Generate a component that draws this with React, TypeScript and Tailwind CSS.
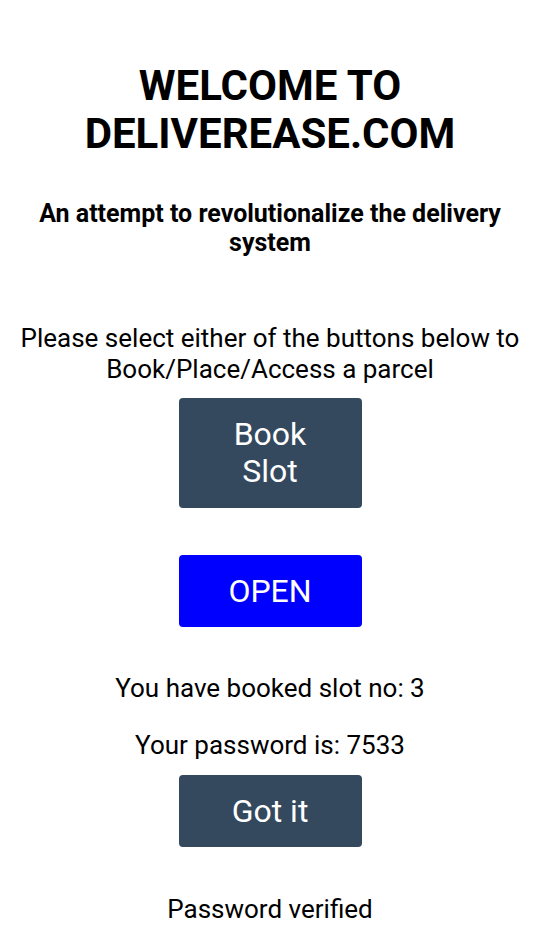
export default function App() {
  return (
    <div className="min-h-screen bg-white text-black pl-1 flex flex-col items-center text-center font-['Roboto',_'Liberation_Sans',_sans-serif]">
      <h1 className="mt-[62px] text-[42px] leading-[48px] font-bold">
        WELCOME TO
        <br />
        DELIVEREASE.COM
      </h1>

      <h2 className="mt-[41px] px-4 text-[25px] leading-[29px] font-bold">
        An attempt to revolutionalize the delivery system
      </h2>

      <p className="mt-[66px] px-4 text-[26px] leading-[31px]">
        Please select either of the buttons below to Book/Place/Access a parcel
      </p>

      <button className="mt-[13px] w-[183px] py-[18px] px-10 rounded-[4px] bg-[#34495e] text-white text-[32px] leading-[37px]">
        Book
        <br />
        Slot
      </button>

      <button className="mt-[47px] w-[183px] py-[17px] rounded-[4px] bg-[#0000ff] text-white text-[32px] leading-[38px]">
        OPEN
      </button>

      <p className="mt-[46px] text-[26px] leading-[31px]">You have booked slot no: 3</p>
      <p className="mt-[26px] text-[26px] leading-[31px]">Your password is: 7533</p>

      <button className="mt-[14px] w-[183px] py-[17px] rounded-[4px] bg-[#34495e] text-white text-[32px] leading-[38px]">
        Got it
      </button>

      <p className="mt-[47px] text-[26px] leading-[31px]">Password verified</p>
    </div>
  );
}
